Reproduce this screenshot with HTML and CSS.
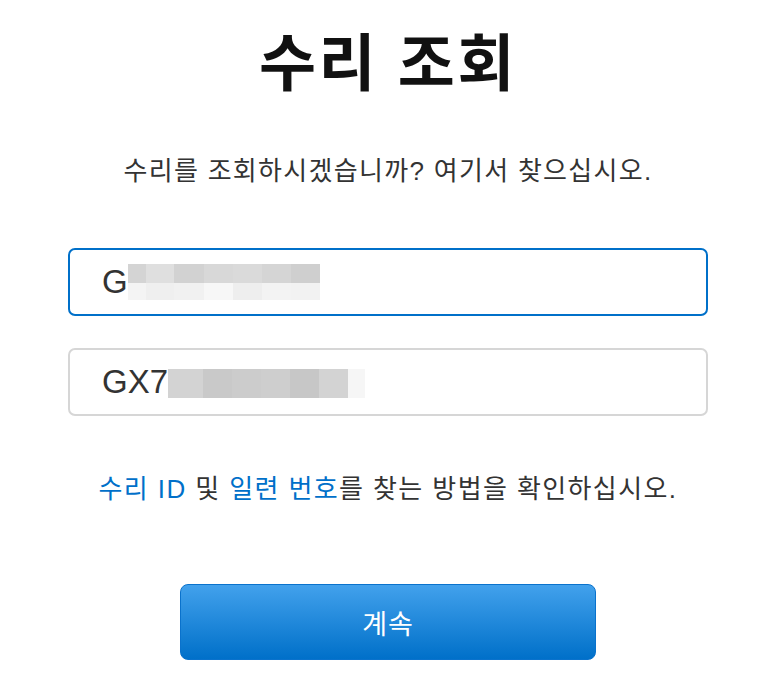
FILE: index.html
```html
<!DOCTYPE html>
<html lang="ko">

<head>
    <meta charset="UTF-8">
    <meta name="viewport" content="width=device-width, initial-scale=1.0">
    <title>수리 조회</title>
    <link rel="stylesheet" href="styles.css">
</head>

<body>
    <div class="lookup">
        <h1 class="title">수리 조회</h1>
        <p class="intro">수리를 조회하시겠습니까? 여기서 찾으십시오.</p>

        <!-- 입력 -->
        <form class="form">
            <div class="field focused">
                <span class="value">G</span>
                <span class="mosaic mosaic-1"></span>
            </div>
            <div class="field">
                <span class="value">GX7</span>
                <span class="mosaic mosaic-2"></span>
            </div>
        </form>

        <p class="help"><a href="#">수리 ID</a> 및 <a href="#">일련 번호</a>를 찾는 방법을 확인하십시오.</p>

        <div class="actions">
            <button class="btn" type="button">계속</button>
        </div>
    </div>
</body>

</html>
```

FILE: styles.css
```css
html,
body {
    margin: 0;
    padding: 0;
    background: #fff;
}

body {
    padding-left: 10px;
    font-family: "Liberation Sans", "Noto Sans CJK KR", sans-serif;
    color: #333;
}

.lookup {
    width: 640px;
    margin: 0 auto;
}

.title {
    margin: 0;
    padding-top: 25px;
    font-size: 62px;
    line-height: 80px;
    font-weight: 700;
    letter-spacing: 2.5px;
    color: #111;
    text-align: center;
}

.intro {
    margin: 49px 0 0;
    font-size: 26px;
    line-height: 34px;
    letter-spacing: 1.3px;
    text-align: center;
}

/* 입력칸 */
.form {
    margin-top: 60px;
    display: flex;
    flex-direction: column;
    gap: 32px;
}

.field {
    box-sizing: border-box;
    height: 68px;
    padding-left: 32px;
    border: 2px solid #d6d6d6;
    border-radius: 7px;
    display: flex;
    align-items: center;
}

.field.focused {
    border-color: #0070c9;
}

.value {
    font-size: 33px;
    color: #333;
}

.mosaic {
    display: block;
}

.mosaic-1 {
    width: 192px;
    height: 36px;
    background:
        linear-gradient(to right, #d4d4d4 0 18px, #dfdfdf 18px 46px, #d2d2d2 46px 76px, #d8d8d8 76px 105px, #dadada 105px 134px, #d5d5d5 134px 163px, #cfcfcf 163px) top / 100% 19px no-repeat,
        linear-gradient(to right, #f4f4f4 0 18px, #efefef 18px 46px, #f1f1f1 46px 76px, #f7f7f7 76px 105px, #eeeeee 105px 134px, #f3f3f3 134px 163px, #f2f2f2 163px) bottom / 100% 17px no-repeat;
}

.mosaic-2 {
    width: 197px;
    height: 29px;
    margin-top: 2px;
    background: linear-gradient(to right, #d3d3d3 0 35px, #c9c9c9 35px 64px, #cccccc 64px 93px, #cecece 93px 122px, #c7c7c7 122px 151px, #d3d3d3 151px 180px, #f6f6f6 180px);
}

.help {
    margin: 56px 0 0;
    font-size: 26px;
    line-height: 34px;
    letter-spacing: 1.4px;
    text-align: center;
}

.help a {
    color: #0070c9;
    text-decoration: none;
}

.actions {
    margin-top: 78px;
    display: flex;
    justify-content: center;
}

.btn {
    width: 416px;
    height: 76px;
    border: 1px solid #0a72cc;
    border-radius: 8px;
    background: linear-gradient(#42a1ec, #0070c9);
    color: #fff;
    font-family: "Liberation Sans", "Noto Sans CJK KR", sans-serif;
    font-size: 27px;
    letter-spacing: 1px;
    cursor: pointer;
}
```
